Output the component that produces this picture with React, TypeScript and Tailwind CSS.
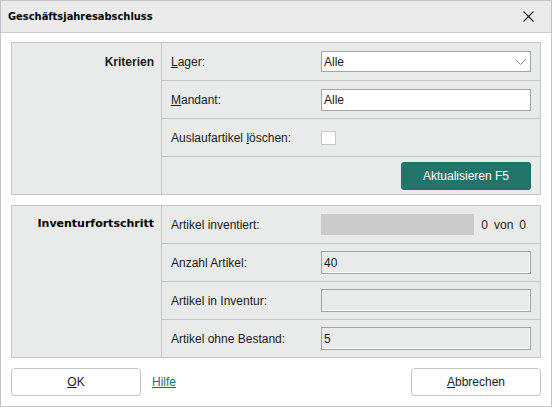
import type { ReactNode } from 'react';

function Label({ children }: { children: ReactNode }) {
  return <span className="w-[150px] shrink-0">{children}</span>;
}

function Row({ children, last }: { children: ReactNode; last?: boolean }) {
  return (
    <div
      className={
        last
          ? 'h-[37px] flex items-center px-[9px]'
          : 'h-[38px] flex items-center px-[9px] border-b border-[#c6c6c6]'
      }
    >
      {children}
    </div>
  );
}

function ReadOnlyField({ value }: { value: string }) {
  return (
    <div className="w-[210px] h-[23px] border border-[#a3a3a3] bg-[#e9eaea] shadow-[inset_-1px_-1px_0_#ffffff] flex items-center pl-[2px]">
      {value}
    </div>
  );
}

function Panel({
  title,
  titleClass,
  children,
}: {
  title: string;
  titleClass: string;
  children: ReactNode;
}) {
  return (
    <div className="flex border border-[#c6c6c6] bg-[#e9eaea]">
      <div className="w-[150px] shrink-0 border-r border-[#c6c6c6]">
        <div className="h-[37px] flex items-center justify-end pr-[7px]">
          <span className={titleClass}>{title}</span>
        </div>
      </div>
      <div className="flex-1 flex flex-col">{children}</div>
    </div>
  );
}

export default function App() {
  return (
    <div className="w-[552px] h-[407px] border border-[#c4c4c4] bg-white flex flex-col font-['Liberation_Sans',Arial,sans-serif] text-[12px] text-[#1b1b1b]">
      <div className="h-[32px] shrink-0 bg-[#ebebeb] border-b border-[#cacaca] flex items-center justify-between pl-[7px] pr-[17px]">
        <span className="font-['DejaVu_Sans_Condensed','DejaVu_Sans',sans-serif] font-bold text-[11px] text-black pt-[2px]">
          Geschäftsjahresabschluss
        </span>
        <svg width="11" height="11" viewBox="0 0 11 11" className="text-[#222]">
          <path
            d="M0.5 0.5 L10.5 10.5 M10.5 0.5 L0.5 10.5"
            stroke="currentColor"
            strokeWidth="1.1"
          />
        </svg>
      </div>

      <div className="flex-1 flex flex-col px-[10px] pt-[9px] pb-[10px]">
        <Panel title="Kriterien" titleClass="font-bold">
          <Row>
            <Label>
              <u>L</u>ager:
            </Label>
            <div className="w-[210px] h-[21px] border border-[#a3a3a3] bg-white flex items-center justify-between pl-[2px] pr-[4px]">
              <span>Alle</span>
              <svg width="11" height="6" viewBox="0 0 11 6">
                <path
                  d="M0.5 0.5 L5.5 5.5 L10.5 0.5"
                  fill="none"
                  stroke="#8a8a8a"
                  strokeWidth="1"
                />
              </svg>
            </div>
          </Row>
          <Row>
            <Label>
              <u>M</u>andant:
            </Label>
            <div className="w-[210px] h-[22px] border border-[#a3a3a3] bg-white flex items-center pl-[2px]">
              Alle
            </div>
          </Row>
          <Row>
            <Label>
              Auslaufartikel <u>l</u>öschen:
            </Label>
            <div className="w-[15px] h-[14px] border border-[#c8c8c8] bg-white" />
          </Row>
          <Row last>
            <div className="flex-1" />
            <button
              type="button"
              className="w-[130px] h-[28px] rounded-[3px] bg-[#22746a] text-white text-[12px]"
            >
              Aktualisieren F5
            </button>
          </Row>
        </Panel>

        <div className="mt-[10px]">
          <Panel
            title="Inventurfortschritt"
            titleClass="font-['DejaVu_Sans',sans-serif] font-bold text-[11px] text-black"
          >
            <Row>
              <Label>Artikel inventiert:</Label>
              <div className="w-[153px] h-[21px] bg-[#cbcbcb]" />
              <div className="flex-1 flex justify-end gap-[6px] pr-[5px]">
                <span>0</span>
                <span>von</span>
                <span>0</span>
              </div>
            </Row>
            <Row>
              <Label>Anzahl Artikel:</Label>
              <ReadOnlyField value="40" />
            </Row>
            <Row>
              <Label>Artikel in Inventur:</Label>
              <ReadOnlyField value="" />
            </Row>
            <Row last>
              <Label>Artikel ohne Bestand:</Label>
              <ReadOnlyField value="5" />
            </Row>
          </Panel>
        </div>

        <div className="mt-[10px] flex items-center">
          <button
            type="button"
            className="w-[130px] h-[28px] rounded-[4px] border border-[#c5c5c5] bg-white"
          >
            <u>O</u>K
          </button>
          <a href="#" className="ml-[11px] text-[#1c6e6f] underline">
            Hilfe
          </a>
          <div className="flex-1" />
          <button
            type="button"
            className="w-[130px] h-[28px] rounded-[4px] border border-[#c5c5c5] bg-white"
          >
            <u>A</u>bbrechen
          </button>
        </div>
      </div>
    </div>
  );
}
